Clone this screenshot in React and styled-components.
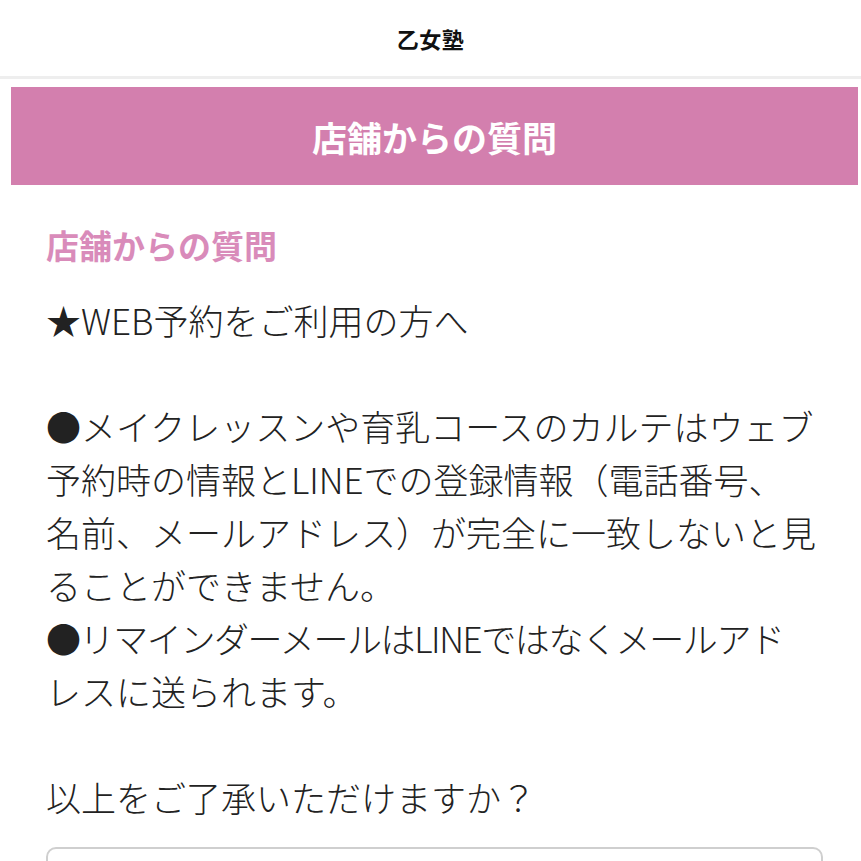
import React from "react";
import styled, { createGlobalStyle } from "styled-components";

const GlobalStyle = createGlobalStyle`
  html, body {
    margin: 0;
    padding: 0;
    background: #ffffff;
  }
  body {
    font-family: "Noto Sans CJK JP", "Noto Sans", sans-serif;
    color: #222222;
  }
`;

const Header = styled.header`
  height: 76px;
  display: flex;
  align-items: center;
  justify-content: center;
  border-bottom: 3px solid #eeeeee;
`;

const SiteTitle = styled.h1`
  margin: 0;
  font-size: 22px;
  font-weight: 700;
  color: #111111;
  letter-spacing: 0.5px;
`;

const Main = styled.main`
  padding: 8px 3px 0 11px;
`;

const Banner = styled.div`
  height: 98px;
  display: flex;
  align-items: center;
  justify-content: center;
  background: #d37fae;
`;

const BannerTitle = styled.h2`
  margin: 0;
  font-size: 35px;
  font-weight: 700;
  color: #ffffff;
`;

const Content = styled.section`
  padding: 36px 35px 0;
`;

const QuestionTitle = styled.h3`
  margin: 0;
  font-size: 33px;
  line-height: 48px;
  font-weight: 700;
  color: #d98bba;
`;

const Body = styled.p`
  margin: 24px 0 0;
  font-size: 35px;
  line-height: 53px;
  font-weight: 300;
  white-space: nowrap;
  color: #222222;
`;

const Tight = styled.span`
  letter-spacing: ${(p) => p.$spacing};
`;

const AnswerBox = styled.div`
  margin-top: 24px;
  height: 60px;
  border: 2px solid #cfcfcf;
  border-radius: 10px;
  background: #ffffff;
`;

export default function App() {
  return (
    <>
      <GlobalStyle />
      <Header>
        <SiteTitle>乙女塾</SiteTitle>
      </Header>
      <Main>
        <Banner>
          <BannerTitle>店舗からの質問</BannerTitle>
        </Banner>
        <Content>
          <QuestionTitle>店舗からの質問</QuestionTitle>
          <Body>
            ★WEB予約をご利用の方へ
            <br />
            <br />
            ●メイクレッスンや育乳コースのカルテはウェブ
            <br />
            予約時の情報とLINEでの登録情報（電話番号、
            <br />
            名前、メールアドレス）が完全に一致しないと見
            <br />
            ることができません。
            <br />
            <Tight $spacing="-1.4px">●リマインダーメールはLINEではなくメールアド</Tight>
            <br />
            レスに送られます。
            <br />
            <br />
            以上をご了承いただけますか？
          </Body>
          <AnswerBox />
        </Content>
      </Main>
    </>
  );
}
